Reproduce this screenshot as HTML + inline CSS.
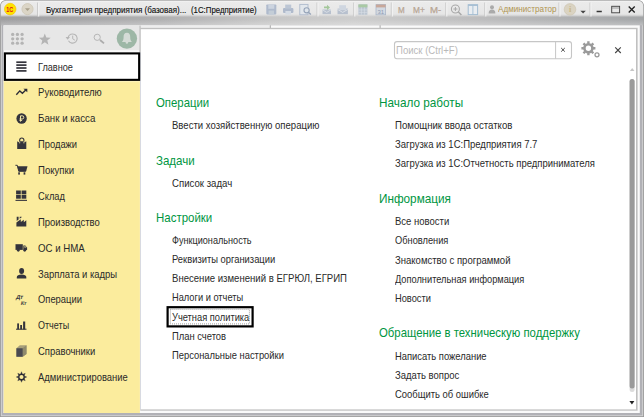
<!DOCTYPE html>
<html lang="ru"><head><meta charset="utf-8"><title>1С:Предприятие</title>
<style>
html,body{margin:0;padding:0}
body{width:644px;height:417px;overflow:hidden;position:relative;background:#fff;font-family:"Liberation Sans",sans-serif;color:#333}
.abs{position:absolute}
.abs,.si,.h,.l,.tb{transform:scaleX(0.893);transform-origin:0 50%}
.tt{top:4.800px;font-size:9.100px;line-height:11px;color:#111;white-space:nowrap;-webkit-text-stroke:0.150px #111}
#ttext{left:45.700px;transform:scaleX(0.881)}
#ttext2{left:191.400px;transform:scaleX(0.861)}
.si{position:absolute;left:38px;font-size:10.600px;line-height:14px;color:#2a2a2a;white-space:nowrap}
.h{position:absolute;font-size:12.700px;line-height:16px;transform:scaleX(0.908);margin-top:0.700px;color:#00963f;white-space:nowrap}
.l{position:absolute;font-size:10.500px;line-height:13px;transform:scaleX(0.910);margin-top:-0.300px;color:#2a2a2a;white-space:nowrap}
#ph{left:396.400px;top:44.200px;font-size:10.400px;line-height:13px;color:#b9b9b9;white-space:nowrap;transform:scaleX(0.921)}
.tb{position:absolute;font-size:9.800px;line-height:11px;color:#b7a594;white-space:nowrap;top:3.800px;-webkit-text-stroke:0.250px #b7a594}
#adm{left:498px;top:4px;font-size:9.100px;line-height:11px;color:#b09552;white-space:nowrap}
svg{position:absolute;left:0;top:0}
</style></head><body>
<!--SVG-->
<svg width="644" height="417" viewBox="0 0 644 417">
<defs>
<linearGradient id="hb" x1="0" x2="1" y1="0" y2="0"><stop offset="0" stop-color="#9e9ea0"/><stop offset="0.25" stop-color="#b0b0b1"/><stop offset="0.42" stop-color="#c6c6c6"/><stop offset="0.55" stop-color="#cdcdcd"/><stop offset="0.75" stop-color="#bcbcbd"/><stop offset="1" stop-color="#a4a6a8"/></linearGradient>
<linearGradient id="vt" x1="0" x2="0" y1="0" y2="1">
<stop offset="0" stop-color="#f8f8f8"/><stop offset="0.05" stop-color="#ebebeb"/><stop offset="0.54" stop-color="#e6e6e6"/><stop offset="0.59" stop-color="#dedede" stop-opacity="0.900"/><stop offset="0.67" stop-color="#d0d0d0" stop-opacity="0"/><stop offset="0.75" stop-color="#ffffff" stop-opacity="0"/><stop offset="1" stop-color="#ffffff" stop-opacity="0.280"/></linearGradient>
</defs>
<!-- frame -->
<path d="M0 417V6a6 6 0 0 1 6-6H638a6 6 0 0 1 6 6V417z" fill="#969696"/>
<path d="M0.800 416.200V6a5.200 5.200 0 0 1 5.200-5.200H638a5.200 5.200 0 0 1 5.200 5.200V416.200z" fill="#d3d3d3"/>
<path d="M1.800 415.200V6a4.200 4.200 0 0 1 4.200-4.200H638a4.200 4.200 0 0 1 4.200 4.200V415.200z" fill="#b1b1b6"/>
<!-- title band -->
<path d="M0.800 25.300V6a5.200 5.200 0 0 1 5.200-5.200H638a5.200 5.200 0 0 1 5.200 5.200V25.300z" fill="url(#hb)"/>
<path d="M0.800 25.300V6a5.200 5.200 0 0 1 5.200-5.200H638a5.200 5.200 0 0 1 5.200 5.200V25.300z" fill="url(#vt)"/>
<!-- white client -->
<rect x="3.400" y="25.300" width="636.400" height="387.700" fill="#fafafa"/>
<rect x="141" y="25.500" width="129" height="2.300" fill="#eeeeee"/>
<rect x="269.800" y="25.300" width="1" height="3" fill="#a8a8a8"/>
<rect x="379.600" y="25.300" width="1" height="3" fill="#a8a8a8"/>
<!-- sidebar toolbar -->
<rect x="3.600" y="25.700" width="135.800" height="24.500" fill="#e7e7e7"/>
<!-- sidebar -->
<rect x="3.700" y="80.500" width="136.200" height="332.500" fill="#fbec9d"/>
<rect x="3.700" y="81" width="136.200" height="1.200" fill="#fdf2b8"/>
<!-- content border -->
<rect x="140.300" y="27.800" width="497.300" height="382.900" fill="#c0c0c0"/>
<rect x="139.400" y="25.700" width="1.300" height="26.600" fill="#bcbcbc"/>
<rect x="140" y="52.300" width="0.800" height="357.200" fill="#cfd1dc"/>
<rect x="140.800" y="29.200" width="495.200" height="380.200" fill="#fff"/>
<!-- selected item -->
<rect x="4.900" y="53.400" width="134.250" height="26.450" fill="#fff" stroke="#000" stroke-width="2.100"/>
<!-- selected link -->
<rect x="167.600" y="307.200" width="85" height="19.200" fill="#fff" stroke="#000" stroke-width="2.200"/>
<rect x="170.400" y="309.300" width="79" height="14.600" fill="none" stroke="#888" stroke-width="0.800" stroke-dasharray="1 1"/>
<!-- search box -->
<rect x="394.500" y="41.600" width="177" height="17.200" rx="2.500" fill="#fff" stroke="#c6c6c6" stroke-width="1.100"/>
<path d="M555.600 41.600v17.200" stroke="#c6c6c6" stroke-width="1"/>
<!-- title bar: 1C logo -->
<circle cx="10.2" cy="9.1" r="5.8" fill="#ffe100" stroke="#f3c400" stroke-width="0.6"/>
<text transform="translate(6.300 11.800) scale(0.800 1.150)" font-family="Liberation Sans, sans-serif" font-size="6.800" font-weight="bold" fill="#e0141c">1C</text>
<!-- dropdown round button -->
<circle cx="27.500" cy="9.100" r="5.600" fill="#dbd5c6" stroke="#cbc4b2" stroke-width="0.700"/>
<path d="M25 8.2h5l-2.5 2.8z" fill="#a9a08c"/>
<path d="M37.7 2.5v14" stroke="#c4c4c4" stroke-width="1"/>
<path d="M38.7 2.5v14" stroke="#f6f6f6" stroke-width="1"/>
<!-- save icon -->
<g opacity="0.9">
<rect x="266.3" y="4.4" width="10" height="10" rx="0.8" fill="#a9b6ca"/>
<rect x="268.3" y="4.8" width="6" height="4" fill="#c9d2df"/>
<rect x="268.6" y="10.6" width="5.4" height="3.8" fill="#c0cbd6"/>
<!-- printer -->
<rect x="283" y="8" width="10.4" height="5" rx="1" fill="#a9b6ca"/>
<rect x="285.2" y="4.6" width="6" height="4" fill="#b8c3d3"/>
<rect x="285.4" y="11" width="5.6" height="3.6" fill="#d4dbe5"/>
<!-- preview -->
<rect x="299.800" y="4.400" width="8.200" height="10.400" fill="#e2e7ed" stroke="#a9b6ca" stroke-width="0.900"/>
<circle cx="306.6" cy="10.3" r="2.6" fill="#dfe5ec" stroke="#8d9db4" stroke-width="1.1"/>
<path d="M308.4 12.2l2.4 2.4" stroke="#8d9db4" stroke-width="1.4"/>
</g>
<path d="M317 2.5v14" stroke="#c8c8c8" stroke-width="1"/>
<path d="M318 2.5v14" stroke="#f4f4f4" stroke-width="1"/>
<!-- mail send -->
<path d="M322.5 9.5h8.5v4.6h-8.5z" fill="#b7c0ce"/>
<path d="M322.5 9.8l4.2 2.6 4.3-2.6" stroke="#dfe4ea" stroke-width="0.8" fill="none"/>
<path d="M324 6.6h3v-1.8l3 2.6-3 2.6v-1.8h-3z" fill="#a3c79a"/>
<!-- mail 2 -->
<path d="M337.5 8.6h10.4v5.6h-10.4z" fill="#b7c0ce"/>
<path d="M339.2 5.2h6.8v5h-6.8z" fill="#cfd6e0"/>
<path d="M337.5 9.4l5.2 3 5.2-3" stroke="#e3e7ec" stroke-width="0.8" fill="none"/>
<path d="M353.8 2.5v14" stroke="#c8c8c8" stroke-width="1"/>
<path d="M354.8 2.5v14" stroke="#f4f4f4" stroke-width="1"/>
<!-- calculator -->
<rect x="358.4" y="4.4" width="9" height="10.4" fill="#bcc6d2"/>
<rect x="358.4" y="4.4" width="9" height="3" fill="#a9c9a4"/>
<path d="M361.4 7.4v7.4M364.4 7.4v7.4M358.4 9.9h9M358.4 12.4h9" stroke="#d9dfe6" stroke-width="0.6"/>
<!-- calendar -->
<rect x="376" y="4.6" width="9.6" height="10.2" fill="#d3d9e2" stroke="#aab6c8" stroke-width="0.8"/>
<rect x="376" y="4.6" width="9.6" height="2.8" fill="#c8a79a"/>
<text x="377.4" y="13.6" font-family="Liberation Sans, sans-serif" font-size="6" fill="#8f9db3">31</text>
<path d="M391.3 2.5v14" stroke="#c8c8c8" stroke-width="1"/>
<path d="M392.3 2.5v14" stroke="#f4f4f4" stroke-width="1"/>
<path d="M445.8 2.5v14" stroke="#c8c8c8" stroke-width="1"/>
<path d="M446.8 2.5v14" stroke="#f4f4f4" stroke-width="1"/>
<!-- zoom -->
<circle cx="455.4" cy="9" r="4" fill="none" stroke="#a8a8a8" stroke-width="1.1"/>
<path d="M453.4 9h4M455.4 7v4" stroke="#a8a8a8" stroke-width="1"/>
<path d="M458.4 12l3 3" stroke="#a8a8a8" stroke-width="1.5"/>
<!-- table -->
<rect x="468.200" y="4.700" width="9.400" height="9.900" fill="#e9edf1" stroke="#a3bdd2" stroke-width="1"/>
<path d="M472.900 5.500v9" stroke="#a3bdd2" stroke-width="0.900"/>
<path d="M468.200 5.300h9.400" stroke="#a3bdd2" stroke-width="1.200"/>
<path d="M484.8 2.5v14" stroke="#c8c8c8" stroke-width="1"/>
<path d="M485.8 2.5v14" stroke="#f4f4f4" stroke-width="1"/>
<!-- user -->
<circle cx="492" cy="7.2" r="2" fill="#aaa"/>
<path d="M488.6 13.4c0-2.6 1.4-3.8 3.4-3.8s3.4 1.2 3.4 3.8z" fill="#aaa"/>
<path d="M559 2.5v14" stroke="#c8c8c8" stroke-width="1"/>
<path d="M560 2.5v14" stroke="#f4f4f4" stroke-width="1"/>
<!-- info -->
<circle cx="570" cy="9.4" r="5.8" fill="#dad3c2" stroke="#cbc3ae" stroke-width="0.6"/>
<text x="568.9" y="12.4" font-family="Liberation Serif, serif" font-size="8.5" font-weight="bold" fill="#c9b98c">i</text>
<path d="M580.4 10.8h5.4l-2.7 2.6z" fill="#444"/>
<path d="M590 2.5v14" stroke="#c8c8c8" stroke-width="1"/>
<path d="M591 2.5v14" stroke="#f4f4f4" stroke-width="1"/>
<!-- window buttons -->
<path d="M596.600 11.500h5.200" stroke="#333" stroke-width="1.500"/>
<rect x="611.700" y="6.300" width="7.900" height="6.500" fill="none" stroke="#444" stroke-width="0.950"/>
<path d="M611.700 8h7.900" stroke="#777" stroke-width="0.700"/>
<path d="M628.700 6.500l6 6M634.700 6.500l-6 6" stroke="#222" stroke-width="1.350"/>

<!-- sidebar toolbar icons -->
<g fill="#b4b4b4">
<circle cx="12.700" cy="34.400" r="1.650"/><circle cx="17.400" cy="34.400" r="1.650"/><circle cx="22.100" cy="34.400" r="1.650"/>
<circle cx="12.700" cy="38.800" r="1.650"/><circle cx="17.400" cy="38.800" r="1.650"/><circle cx="22.100" cy="38.800" r="1.650"/>
<circle cx="12.700" cy="43.200" r="1.650"/><circle cx="17.400" cy="43.200" r="1.650"/><circle cx="22.100" cy="43.200" r="1.650"/>
<path d="M44.800 33.400l1.550 4.050 4.350.25-3.400 2.750 1.150 4.200-3.650-2.400-3.650 2.400 1.150-4.200-3.400-2.750 4.350-.25z"/>
</g>
<!-- history -->
<path d="M68.500 40.700a4.600 4.600 0 1 0-.400-3.200" fill="none" stroke="#b6b6b6" stroke-width="1.100"/>
<path d="M65.600 37h4.400l-2.400 2.800z" fill="#b6b6b6"/>
<path d="M72.700 35.600v3.200l2.200 1.400" fill="none" stroke="#b6b6b6" stroke-width="1"/>
<!-- search -->
<circle cx="97.200" cy="37.300" r="3.100" fill="none" stroke="#b6b6b6" stroke-width="1"/>
<path d="M100 40l4 3.400" stroke="#acacac" stroke-width="1.800"/>
<!-- bell -->
<circle cx="126.900" cy="38.600" r="10.200" fill="#9db7a6"/>
<path d="M126.900 32.700c2.500 0 3.300 2 3.300 4.200 0 2.500 0.500 3.700 1.700 5.100h-10c1.200-1.400 1.700-2.600 1.700-5.100 0-2.200 0.800-4.200 3.300-4.200z" fill="#d5dbd6"/>
<circle cx="126.900" cy="42.600" r="1.250" fill="#d5dbd6"/>

<!-- sidebar icons -->
<g fill="#34343c" stroke="none">
<!-- hamburger -->
<rect x="16.300" y="61.350" width="10.200" height="1.700"/><rect x="16.300" y="64.250" width="10.200" height="1.700"/><rect x="16.300" y="67.150" width="10.200" height="1.700"/><rect x="16.300" y="70.050" width="10.200" height="1.700"/>
<!-- ruble coin -->
<circle cx="21.600" cy="118.500" r="5.200"/>
<!-- bag -->
<path d="M17.200 141.200l1.600 1 .9-1h4l.9 1 1.700-1v7.700h-9.100z"/>
<!-- cart -->
<path d="M17.300 166.300h10.200l-1.300 5h-7.700z"/>
<rect x="18.200" y="172.300" width="1.700" height="2.300"/><rect x="23.600" y="172.300" width="1.700" height="2.300"/>
<!-- warehouse -->
<rect x="16.100" y="190.500" width="4.700" height="3.800"/><rect x="21.600" y="190.500" width="4.700" height="3.800"/>
<rect x="16.100" y="194.900" width="4.700" height="3.800"/><rect x="21.600" y="194.900" width="4.700" height="3.800"/>
<rect x="15.500" y="199.800" width="11.500" height="1.100"/>
<!-- factory -->
<path d="M16.400 226.500v-3.900l4.400-3.400v2.900l3-2.300v2.500l2.500-2v6.200z"/>
<path d="M16.700 216.800h1.900v2.600l-1.900 1.500z"/>
<path d="M19.700 216.800h1.900v.5l-1.900 1.500z"/>
<!-- truck -->
<rect x="15.500" y="244.200" width="7.300" height="5.700"/>
<path d="M23.300 245.500h2l1.800 2.200v2.200h-3.800z"/>
<circle cx="18.300" cy="250.300" r="1.350"/><circle cx="24.700" cy="250.300" r="1.350"/>
<!-- person -->
<ellipse cx="21.600" cy="271" rx="2.500" ry="2.900"/>
<path d="M16.800 278.600v-1.700c0-1.300 2-2.400 4.800-2.400s4.700 1.100 4.700 2.400v1.700z"/>
<!-- bar chart -->
<rect x="17.200" y="323.400" width="1.800" height="6"/><rect x="20.200" y="325" width="1.800" height="4.400"/><rect x="23.100" y="321.500" width="2.100" height="8"/>
<rect x="16" y="328.700" width="10.500" height="1"/>
</g>
<!-- trend arrow -->
<path d="M16.300 94.700l3.500-3.800 2.600 2.300 3.400-3.200" fill="none" stroke="#2c2c36" stroke-width="1.400"/>
<path d="M23.400 88.800h3.900v3.500z" fill="#2c2c36"/>
<!-- ruble mark -->
<path d="M20.500 121.600v-5.800h1.700a1.600 1.600 0 0 1 0 3.200h-2.700M19.500 120.400h2.600" fill="none" stroke="#f3e7a8" stroke-width="1"/>
<!-- bag handle -->
<path d="M19.700 141.400v-1.300a2.100 2.100 0 0 1 4.200 0v1.300" fill="none" stroke="#34343c" stroke-width="1.100"/>
<path d="M19.700 141.800v1.600M23.900 141.800v1.600" stroke="#f3e7a8" stroke-width="0.800"/>
<!-- cart handle -->
<path d="M15.400 165.300h1.900l1.500 6h7" fill="none" stroke="#34343c" stroke-width="1"/>
<!-- truck window -->
<path d="M24.300 246.200h1l1 1.400h-2z" fill="#e8dc98"/>
<!-- DtKt -->
<text transform="translate(15.800 298.700) skewX(-12)" font-family="Liberation Sans, sans-serif" font-size="6" font-weight="bold" fill="#3a3a40" letter-spacing="-0.300">Дт</text>
<text transform="translate(20.600 305) skewX(-12)" font-family="Liberation Sans, sans-serif" font-size="5.400" font-weight="bold" fill="#3a3a40" letter-spacing="-0.300">Кт</text>
<!-- book -->
<path d="M16.400 348.200l3.400-3h6.700v8.800l-3.800 2.800h-6.300z" fill="#a8a07a"/>
<path d="M22.700 348.200l3.800-3v8.800l-3.800 2.800z" fill="#8f8a6c"/>
<path d="M16.400 348.200h6.300v8.600h-6.300z" fill="#4a4a50"/>
<!-- admin gear -->
<g stroke="#2c2c36" fill="none">
<circle cx="21.500" cy="377" r="2.700" stroke-width="1.300"/>
</g>
<path d="M20.600 374l.900-2.300.900 2.300z" fill="#2c2c36" stroke="#2c2c36" stroke-width="0.300" transform="rotate(0 21.500 377)"/>
<path d="M20.600 374l.900-2.300.900 2.300z" fill="#2c2c36" stroke="#2c2c36" stroke-width="0.300" transform="rotate(45 21.500 377)"/>
<path d="M20.600 374l.900-2.300.900 2.300z" fill="#2c2c36" stroke="#2c2c36" stroke-width="0.300" transform="rotate(90 21.500 377)"/>
<path d="M20.600 374l.900-2.300.900 2.300z" fill="#2c2c36" stroke="#2c2c36" stroke-width="0.300" transform="rotate(135 21.500 377)"/>
<path d="M20.600 374l.900-2.300.900 2.300z" fill="#2c2c36" stroke="#2c2c36" stroke-width="0.300" transform="rotate(180 21.500 377)"/>
<path d="M20.600 374l.900-2.300.900 2.300z" fill="#2c2c36" stroke="#2c2c36" stroke-width="0.300" transform="rotate(225 21.500 377)"/>
<path d="M20.600 374l.900-2.300.900 2.300z" fill="#2c2c36" stroke="#2c2c36" stroke-width="0.300" transform="rotate(270 21.500 377)"/>
<path d="M20.600 374l.900-2.300.900 2.300z" fill="#2c2c36" stroke="#2c2c36" stroke-width="0.300" transform="rotate(315 21.500 377)"/>

<!-- search clear x -->
<path d="M561.200 48l3.600 3.600M564.800 48l-3.600 3.600" stroke="#333" stroke-width="0.900"/>
<!-- big gear -->
<g stroke="#9a9a9a" fill="none">
<circle cx="588.400" cy="48.300" r="4" stroke-width="2.600"/>
<path d="M588.400 41.300v2.400M588.400 52.900v2.400M581.400 48.300h2.400M593 48.300h2.400M583.450 43.350l1.700 1.700M591.650 51.550l1.700 1.700M593.350 43.350l-1.700 1.700M585.150 51.550l-1.700 1.700" stroke-width="2.400"/>
<circle cx="597" cy="54.800" r="2" stroke-width="1.300"/>
</g>
<!-- close x -->
<path d="M615.200 47.400l5.600 5.600M620.800 47.400l-5.600 5.600" stroke="#444" stroke-width="1.100"/>
<!-- scrollbar -->
<path d="M629.900 70.900l2.300-3 2.300 3z" fill="#c6c6c6"/>
<rect x="629.600" y="79" width="5" height="313" rx="2.500" fill="#dcdcdc"/>
<rect x="629.600" y="79" width="5" height="309.500" rx="2.500" fill="#9a9a9a"/>
<path d="M629.400 401.100h5l-2.500 3.400z" fill="#222"/>
</svg>
<!--/SVG-->
<div id="ttext" class="abs tt">Бухгалтерия предприятия (базовая)...</div>
<div id="ttext2" class="abs tt">(1С:Предприятие)</div>
<div id="ph" class="abs">Поиск (Ctrl+F)</div>
<div class="tb" style="left:397.700px;transform:scaleX(0.82)">M</div>
<div class="tb" style="left:412.700px;transform:scaleX(0.85)">M+</div>
<div class="tb" style="left:429.500px;transform:scaleX(0.98)">M-</div>
<div id="adm" class="abs">Администратор</div>
<!--TXT-->
<div class="si" style="left:37.8px;top:59.60px;transform:scaleX(0.8621)">Главное</div>
<div class="si" style="left:37.8px;top:85.47px;transform:scaleX(0.9026)">Руководителю</div>
<div class="si" style="left:37.8px;top:111.34px;transform:scaleX(0.9184)">Банк и касса</div>
<div class="si" style="left:37.8px;top:137.21px;transform:scaleX(0.8836)">Продажи</div>
<div class="si" style="left:37.8px;top:163.08px;transform:scaleX(0.9057)">Покупки</div>
<div class="si" style="left:37.8px;top:188.95px;transform:scaleX(0.8770)">Склад</div>
<div class="si" style="left:37.8px;top:214.82px;transform:scaleX(0.8946)">Производство</div>
<div class="si" style="left:37.8px;top:240.69px;transform:scaleX(0.9132)">ОС и НМА</div>
<div class="si" style="left:37.8px;top:266.56px;transform:scaleX(0.8924)">Зарплата и кадры</div>
<div class="si" style="left:37.8px;top:292.43px;transform:scaleX(0.8858)">Операции</div>
<div class="si" style="left:37.8px;top:318.30px;transform:scaleX(0.8491)">Отчеты</div>
<div class="si" style="left:37.8px;top:344.17px;transform:scaleX(0.8927)">Справочники</div>
<div class="si" style="left:37.8px;top:370.04px;transform:scaleX(0.8878)">Администрирование</div>
<div class="h" style="left:156.3px;top:94.00px;transform:scaleX(0.8962)">Операции</div>
<div class="h" style="left:156.3px;top:152.00px;transform:scaleX(0.9083)">Задачи</div>
<div class="h" style="left:156.3px;top:209.00px;transform:scaleX(0.9033)">Настройки</div>
<div class="h" style="left:379.4px;top:94.00px;transform:scaleX(0.9259)">Начало работы</div>
<div class="h" style="left:379.4px;top:190.00px;transform:scaleX(0.9255)">Информация</div>
<div class="h" style="left:379.4px;top:324.20px;transform:scaleX(0.8944)">Обращение в техническую поддержку</div>
<div class="l" style="left:171.8px;top:119.00px;transform:scaleX(0.9089)">Ввести хозяйственную операцию</div>
<div class="l" style="left:171.8px;top:177.00px;transform:scaleX(0.9160)">Список задач</div>
<div class="l" style="left:171.8px;top:234.00px;transform:scaleX(0.8676)">Функциональность</div>
<div class="l" style="left:171.8px;top:253.00px;transform:scaleX(0.8930)">Реквизиты организации</div>
<div class="l" style="left:171.8px;top:272.00px;transform:scaleX(0.9123)">Внесение изменений в ЕГРЮЛ, ЕГРИП</div>
<div class="l" style="left:171.8px;top:291.00px;transform:scaleX(0.8829)">Налоги и отчеты</div>
<div class="l" style="left:171.5px;top:311.00px;transform:scaleX(0.8853)">Учетная политика</div>
<div class="l" style="left:171.8px;top:330.00px;transform:scaleX(0.8951)">План счетов</div>
<div class="l" style="left:171.8px;top:349.00px;transform:scaleX(0.8917)">Персональные настройки</div>
<div class="l" style="left:395.2px;top:119.00px;transform:scaleX(0.9163)">Помощник ввода остатков</div>
<div class="l" style="left:395.2px;top:138.00px;transform:scaleX(0.9048)">Загрузка из 1С:Предприятия 7.7</div>
<div class="l" style="left:395.2px;top:157.00px;transform:scaleX(0.9038)">Загрузка из 1С:Отчетность предпринимателя</div>
<div class="l" style="left:395.2px;top:215.00px;transform:scaleX(0.9052)">Все новости</div>
<div class="l" style="left:395.2px;top:234.00px;transform:scaleX(0.8829)">Обновления</div>
<div class="l" style="left:395.2px;top:254.00px;transform:scaleX(0.9079)">Знакомство с программой</div>
<div class="l" style="left:395.2px;top:273.00px;transform:scaleX(0.8809)">Дополнительная информация</div>
<div class="l" style="left:395.2px;top:292.00px;transform:scaleX(0.8830)">Новости</div>
<div class="l" style="left:395.2px;top:350.00px;transform:scaleX(0.8943)">Написать пожелание</div>
<div class="l" style="left:395.2px;top:369.00px;transform:scaleX(0.9052)">Задать вопрос</div>
<div class="l" style="left:395.2px;top:388.00px;transform:scaleX(0.8980)">Сообщить об ошибке</div>
<!--/TXT-->
</body></html>
